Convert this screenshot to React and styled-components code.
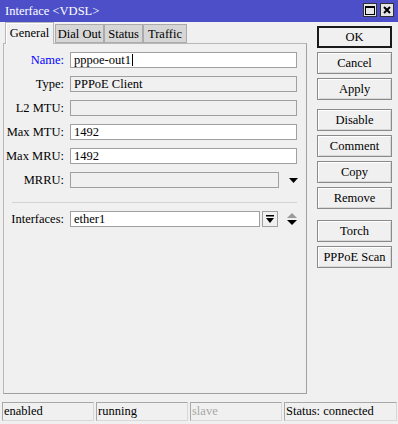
import React from "react";
import styled, { createGlobalStyle } from "styled-components";

const Global = createGlobalStyle`
  html, body { margin: 0; padding: 0; background: #f0f0f0; }
`;

const Window = styled.div`
  width: 398px;
  height: 424px;
  display: flex;
  flex-direction: column;
  background: #f0f0f0;
  overflow: hidden;
  font-family: "Liberation Serif", "Times New Roman", serif;
  font-size: 12.5px;
  color: #000;
`;

const TitleBar = styled.div`
  height: 22px;
  flex: none;
  background: #4c4fc8;
  color: #fff;
  display: flex;
  align-items: center;
  justify-content: space-between;
  padding: 0 4px 0 5px;
  box-sizing: border-box;
  font-size: 12.5px;
`;

const TitleButtons = styled.div`
  display: flex;
  gap: 3px;
  margin-top: -2px;
`;

const TitleBtn = styled.div`
  width: 14px;
  height: 14px;
  box-sizing: border-box;
  border: 1px solid #303030;
  background: #e6e6e6;
  display: flex;
  align-items: center;
  justify-content: center;
`;

const Main = styled.div`
  flex: 1;
  display: flex;
  min-height: 0;
`;

const LeftCol = styled.div`
  width: 304px;
  margin-left: 3px;
  display: flex;
  flex-direction: column;
`;

const Tabs = styled.div`
  height: 21px;
  display: flex;
  align-items: flex-end;
  padding-left: 2px;
  position: relative;
  z-index: 1;
`;

const Tab = styled.div`
  box-sizing: border-box;
  height: ${(p) => (p.$active ? "22px" : "19px")};
  width: ${(p) => p.$w}px;
  display: flex;
  align-items: center;
  justify-content: center;
  white-space: nowrap;
  background: ${(p) => (p.$active ? "#f0f0f0" : "#d6d6d6")};
  border: 1px solid ${(p) => (p.$active ? "#b8b8b8" : "#ababab")};
  border-bottom: ${(p) => (p.$active ? "none" : "1px solid #ababab")};
  box-shadow: ${(p) => (p.$active ? "inset 1px 1px 0 #ffffff" : "none")};
  margin-bottom: ${(p) => (p.$active ? "-1px" : "0")};
  margin-right: ${(p) => (p.$active ? "1px" : "0")};
  padding-top: ${(p) => (p.$active ? "0" : "1px")};
`;

const Panel = styled.div`
  box-sizing: border-box;
  height: 351px;
  border: 1px solid #b8b8b8;
  border-right-color: #a0a0a0;
  border-bottom-color: #a0a0a0;
  padding: 8px 9px 0 0;
  display: flex;
  flex-direction: column;
  gap: 8px;
`;

const Row = styled.div`
  display: grid;
  grid-template-columns: 60px 1fr;
  column-gap: 6px;
  align-items: center;
  height: 16px;
`;

const Label = styled.div`
  text-align: right;
  color: ${(p) => (p.$blue ? "#0000ff" : "#000")};
  white-space: nowrap;
  line-height: 16px;
`;

const FieldWrap = styled.div`
  display: flex;
  align-items: center;
  gap: 2px;
`;

const Input = styled.div`
  box-sizing: border-box;
  height: 16px;
  flex: none;
  width: ${(p) => p.$w || 227}px;
  background: ${(p) => (p.$disabled ? "#f0f0f0" : "#ffffff")};
  border: 1px solid #a0a0a0;
  padding: 0 3px;
  line-height: 14px;
  white-space: nowrap;
  display: flex;
  align-items: center;
`;

const Caret = styled.span`
  display: inline-block;
  width: 1px;
  height: 12px;
  background: #000;
  margin-left: 1px;
`;

const ArrowSlot = styled.div`
  width: 18px;
  height: 16px;
  display: flex;
  align-items: center;
  justify-content: center;
  margin-left: 3px;
`;

const SmallBtn = styled.div`
  box-sizing: border-box;
  width: 16px;
  height: 16px;
  border: 1px solid #a0a0a0;
  background: #f0f0f0;
  display: flex;
  align-items: center;
  justify-content: center;
`;

const Separator = styled.div`
  height: 1px;
  background: #d4d4d4;
  margin: 6px 0 0 8px;
`;

const RightCol = styled.div`
  width: 75px;
  margin-left: 10px;
  padding-top: 4px;
  display: flex;
  flex-direction: column;
`;

const Group = styled.div`
  display: flex;
  flex-direction: column;
  gap: 4px;
  margin-bottom: ${(p) => p.$mb || 0}px;
`;

const Button = styled.div`
  box-sizing: border-box;
  height: 22px;
  border: ${(p) => (p.$default ? "2px solid #1a1a1a" : "1px solid #8a8a8a")};
  box-shadow: ${(p) => (p.$default ? "none" : "inset 1px 1px 0 #ffffff, inset -1px -1px 0 #d8d8d8")};
  background: #f0f0f0;
  display: flex;
  align-items: center;
  justify-content: center;
  white-space: nowrap;
`;

const StatusBar = styled.div`
  height: 19px;
  margin: 0 1px 3px 2px;
  display: grid;
  grid-template-columns: 92px 92px 92px 1fr;
  column-gap: 2px;
`;

const StatusCell = styled.div`
  box-sizing: border-box;
  border: 1px solid #a8a8a8;
  border-right-color: #d8d8d8;
  border-bottom-color: #d8d8d8;
  padding-left: 1px;
  line-height: 17px;
  color: ${(p) => (p.$muted ? "#a8a8a8" : "#000")};
  white-space: nowrap;
  overflow: hidden;
`;

const DownTri = ({ color = "#000" }) => (
  <svg width="9" height="5" viewBox="0 0 9 5"><path d="M0 0H9L4.5 5Z" fill={color} /></svg>
);

export default function App() {
  return (
    <>
      <Global />
      <Window>
        <TitleBar>
          <span>Interface &lt;VDSL&gt;</span>
          <TitleButtons>
            <TitleBtn>
              <svg width="10" height="9" viewBox="0 0 10 9">
                <rect x="0.5" y="0.5" width="9" height="8" fill="none" stroke="#000" />
                <rect x="0" y="0" width="10" height="2" fill="#000" />
              </svg>
            </TitleBtn>
            <TitleBtn>
              <svg width="8" height="8" viewBox="0 0 8 8">
                <path d="M1 1L7 7M7 1L1 7" stroke="#000" strokeWidth="2" />
              </svg>
            </TitleBtn>
          </TitleButtons>
        </TitleBar>
        <Main>
          <LeftCol>
            <Tabs>
              <Tab $active $w={49}>General</Tab>
              <Tab $w={49}>Dial Out</Tab>
              <Tab $w={39}>Status</Tab>
              <Tab $w={44}>Traffic</Tab>
            </Tabs>
            <Panel>
              <Row>
                <Label $blue>Name:</Label>
                <Input>pppoe-out1<Caret /></Input>
              </Row>
              <Row>
                <Label>Type:</Label>
                <Input $disabled>PPPoE Client</Input>
              </Row>
              <Row>
                <Label>L2 MTU:</Label>
                <Input $disabled />
              </Row>
              <Row>
                <Label>Max MTU:</Label>
                <Input>1492</Input>
              </Row>
              <Row>
                <Label>Max MRU:</Label>
                <Input>1492</Input>
              </Row>
              <Row>
                <Label>MRRU:</Label>
                <FieldWrap>
                  <Input $disabled $w={209} />
                  <ArrowSlot><DownTri /></ArrowSlot>
                </FieldWrap>
              </Row>
              <Separator />
              <Row>
                <Label>Interfaces:</Label>
                <FieldWrap>
                  <Input $w={190}>ether1</Input>
                  <SmallBtn>
                    <svg width="8" height="8" viewBox="0 0 8 8">
                      <rect x="0" y="0" width="8" height="1.5" fill="#000" />
                      <path d="M0 3H8L4 8Z" fill="#000" />
                    </svg>
                  </SmallBtn>
                  <ArrowSlot>
                    <svg width="10" height="12" viewBox="0 0 10 12">
                      <path d="M0 5H10L5 0Z" fill="#9a9a9a" />
                      <path d="M0 7H10L5 12Z" fill="#000" />
                    </svg>
                  </ArrowSlot>
                </FieldWrap>
              </Row>
            </Panel>
          </LeftCol>
          <RightCol>
            <Group $mb={9}>
              <Button $default>OK</Button>
              <Button>Cancel</Button>
              <Button>Apply</Button>
            </Group>
            <Group $mb={11}>
              <Button>Disable</Button>
              <Button>Comment</Button>
              <Button>Copy</Button>
              <Button>Remove</Button>
            </Group>
            <Group>
              <Button>Torch</Button>
              <Button>PPPoE Scan</Button>
            </Group>
          </RightCol>
        </Main>
        <StatusBar>
          <StatusCell>enabled</StatusCell>
          <StatusCell>running</StatusCell>
          <StatusCell $muted>slave</StatusCell>
          <StatusCell>Status: connected</StatusCell>
        </StatusBar>
      </Window>
    </>
  );
}
